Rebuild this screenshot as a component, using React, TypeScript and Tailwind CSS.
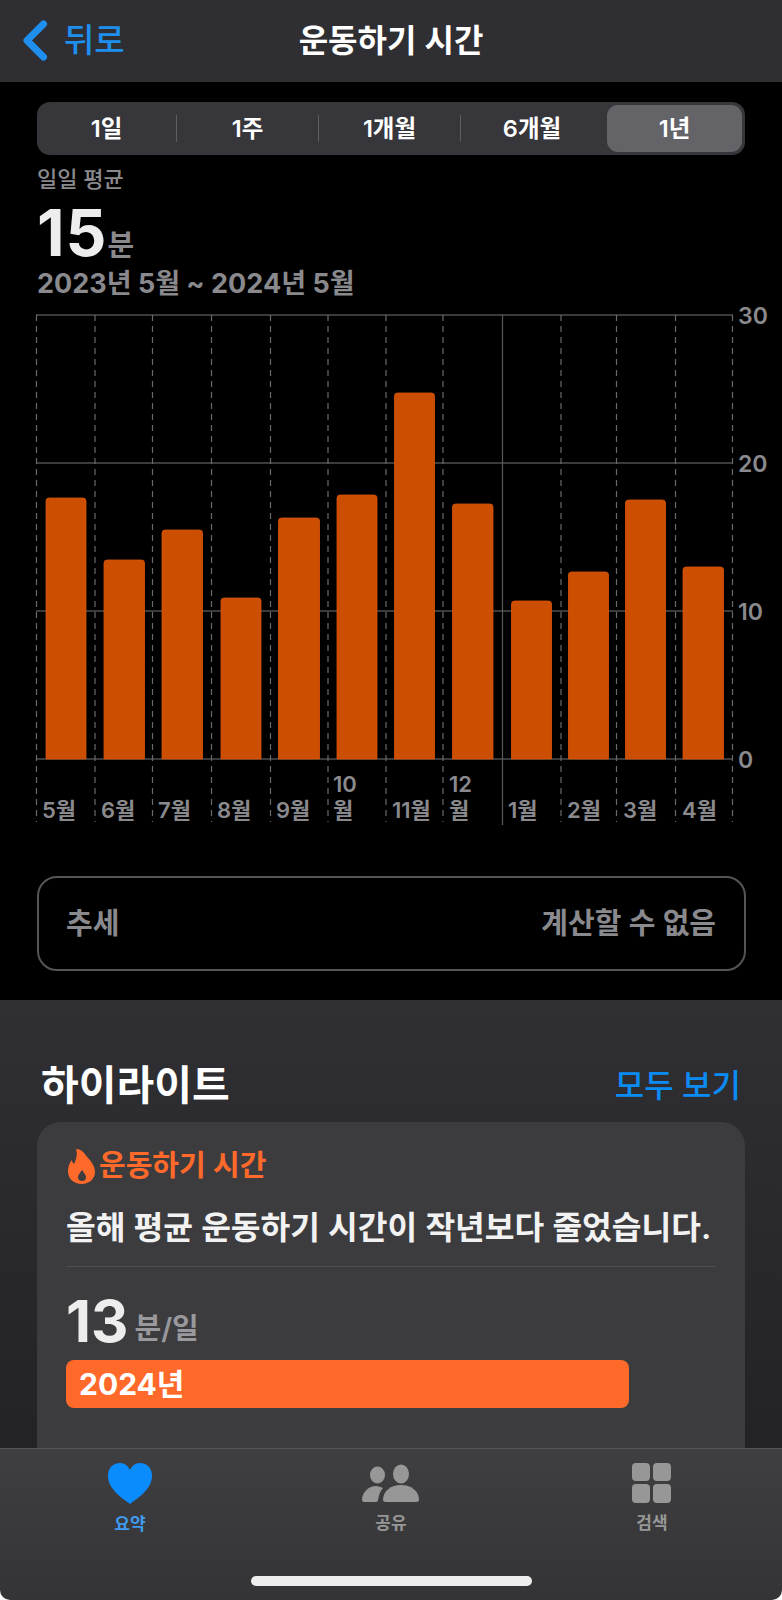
const FONT = '"Inter", "Noto Sans CJK KR", sans-serif';

const TABS = ['1일', '1주', '1개월', '6개월', '1년'];

const GRID_X = [36.5, 95, 152.5, 211.5, 270.5, 328, 386, 443, 502.5, 561, 616.5, 675.5, 732.5];

const BARS = [
  { x: 46, w: 40, top: 498, label: '5월', lx: 42 },
  { x: 104, w: 40.5, top: 560, label: '6월', lx: 101 },
  { x: 162, w: 40.5, top: 530, label: '7월', lx: 158 },
  { x: 221, w: 40, top: 598, label: '8월', lx: 217 },
  { x: 278.5, w: 41, top: 518, label: '9월', lx: 276 },
  { x: 337, w: 40, top: 495, label: '10', lx: 333 },
  { x: 394.5, w: 40, top: 393, label: '11월', lx: 392 },
  { x: 452.5, w: 40.5, top: 504, label: '12', lx: 449 },
  { x: 511.5, w: 40, top: 601, label: '1월', lx: 508 },
  { x: 568.5, w: 40, top: 572, label: '2월', lx: 567 },
  { x: 625.5, w: 40, top: 500, label: '3월', lx: 623 },
  { x: 683, w: 40.5, top: 567, label: '4월', lx: 682 },
];

const Y_LABELS = [
  { y: 315, t: '30' },
  { y: 463, t: '20' },
  { y: 611, t: '10' },
  { y: 759, t: '0' },
];

// svg coords are page coords, the box starts at y=300
function Chart() {
  return (
    <svg width="782" height="530" viewBox="0 300 782 530" className="block" style={{ fontFamily: FONT }}>
      {[315, 463, 611, 759].map((y) => (
        <line key={y} x1="36" x2="733" y1={y} y2={y} stroke="#4f4f52" strokeWidth="1.5" />
      ))}
      {GRID_X.map((x, i) => (
        <line
          key={x}
          x1={x}
          x2={x}
          y1="315"
          y2={i === 8 ? 825 : 822}
          stroke={i === 8 ? '#5a5a5e' : '#6a6a6d'}
          strokeWidth="1.2"
          strokeDasharray={i === 8 ? undefined : '6 5'}
        />
      ))}
      {BARS.map((b) => (
        <path
          key={b.x}
          d={`M${b.x} 759V${b.top + 3}q0-3 3-3H${b.x + b.w - 3}q3 0 3 3V759Z`}
          fill="#cc4e00"
          stroke="#d9540a"
          strokeWidth="0.8"
        />
      ))}
      {BARS.map((b) => (
        <text key={b.label} x={b.lx} y="818" fill="#8a8a8e" fontSize="22" fontWeight="600">
          {b.label === '10' || b.label === '12' ? '월' : b.label}
        </text>
      ))}
      <text x="333" y="792" fill="#8a8a8e" fontSize="22" fontWeight="600">10</text>
      <text x="449" y="792" fill="#8a8a8e" fontSize="22" fontWeight="600">12</text>
      {Y_LABELS.map((l) => (
        <text key={l.t} x="738" y={l.y + 9} fill="#8a8a8e" fontSize="23" fontWeight="600">{l.t}</text>
      ))}
    </svg>
  );
}

function BackChevron() {
  return (
    <svg width="26" height="41" viewBox="0 0 26 41" fill="none" className="shrink-0">
      <path d="M21.5 4 5 20.5 21.5 37" stroke="#1e8fef" strokeWidth="7" strokeLinecap="round" strokeLinejoin="round" />
    </svg>
  );
}

function Flame() {
  return (
    <svg width="27" height="35" viewBox="0 0 27 35" className="ml-[2px] shrink-0">
      <path
        fill="#ff6a2b"
        fillRule="evenodd"
        d="M8 0C14 0 17 5 20 9C24 13 27 18 27 23C27 30 21 35 14 35C6 35 0 30 0 22C0 17 2 13 4 11C4 13 5 14 6 15C8 11 10 5 8 0ZM14 21C12 24 10 26 10 28C10 31 12 32 14 32C16 32 18 31 18 28C18 26 16 24 14 21Z"
      />
    </svg>
  );
}

function Heart() {
  return (
    <svg width="44" height="41" viewBox="0 0 44 41">
      <path
        fill="#0a8cff"
        d="M22 41C14 35 0 26 0 13 0 5 5 0 12 0c5 0 8 3 10 7 2-4 5-7 10-7 7 0 12 5 12 13 0 13-14 22-22 28Z"
      />
    </svg>
  );
}

function People() {
  return (
    <svg width="58" height="40" viewBox="0 0 58 40" fill="#979797">
      <ellipse cx="15.5" cy="12" rx="7.5" ry="8.5" />
      <ellipse cx="39" cy="11" rx="8" ry="9.5" />
      <path d="M0 37c0-7 6-14 14-14 2 0 5 1 7 2-3 3-4 7-5 12 0 1-1 2-2 2H2c-1 0-2-1-2-2Z" />
      <path d="M21 37c0-9 8-15 18-15s18 6 18 15c0 1-1 2-3 2H24c-2 0-3-1-3-2Z" />
    </svg>
  );
}

function GridIcon() {
  return (
    <svg width="40" height="40" viewBox="0 0 40 40" fill="#979797">
      <rect x="0" y="0" width="18" height="18" rx="4" />
      <rect x="21" y="0" width="18" height="18" rx="4" />
      <rect x="0" y="21" width="18" height="19" rx="4" />
      <rect x="21" y="21" width="18" height="19" rx="4" />
    </svg>
  );
}

export default function App() {
  return (
    <div className="flex h-[1600px] w-[782px] flex-col overflow-hidden bg-white" style={{ fontFamily: FONT }}>
      <header className="relative flex h-[82px] shrink-0 items-center justify-center bg-[#2f2f33]">
        <div className="absolute left-[22px] top-[20px] flex items-center gap-[16px] text-[#1e8fef]">
          <BackChevron />
          <span className="text-[33px] font-medium leading-[41px]">뒤로</span>
        </div>
        <h1 className="text-[32px] font-semibold text-white">운동하기 시간</h1>
      </header>

      <section className="h-[918px] shrink-0 bg-black px-[37px] pt-[20px]">
        <div className="flex h-[53px] w-[708px] items-center rounded-[13px] bg-[#36363b]">
          {TABS.map((t, i) => (
            <div key={t} className={`flex items-center ${i === 0 ? 'w-[140px]' : i === 4 ? 'w-[142px] pl-[4px] pr-[3px]' : 'w-[142px]'}`}>
              <div
                className={`flex h-[47px] flex-1 items-center justify-center text-[23.5px] font-semibold text-white ${
                  i === 4 ? 'rounded-[11px] bg-[#636368]' : ''
                }`}
              >
                {t}
              </div>
              {i < 3 && <div className="h-[27px] w-px bg-[#5e5e62]" />}
            </div>
          ))}
        </div>

        <p className="mt-[11px] text-[22px] font-medium leading-[26px] text-[#8a8a8e]">일일 평균</p>
        <div className="mt-[12px] flex items-end leading-none">
          <span className="text-[64px] font-bold leading-[58px] tracking-[1px] text-[#ededed]">15</span>
          <span className="text-[29px] font-semibold leading-[32px] text-[#8a8a8e]">분</span>
        </div>
        <p className="mt-[6px] text-[27px] font-bold leading-[32px] text-[#8a8a8e]">2023년 5월 ~ 2024년 5월</p>

        <div className="-ml-[37px]">
          <Chart />
        </div>

        <div className="mt-[46px] flex h-[95px] w-[709px] items-center justify-between rounded-[20px] border-2 border-[#555558] pl-[27px] pr-[28px] text-[29px] font-semibold text-[#8a8a8e]">
          <span>추세</span>
          <span>계산할 수 없음</span>
        </div>
      </section>

      <section className="min-h-0 flex-1 bg-linear-to-b from-[#303034] to-[#232325] px-[37px] pt-[58px]">
        <div className="flex items-center justify-between pl-[4px] pr-[4px]">
          <h2 className="text-[41px] font-semibold leading-[50px] text-white">하이라이트</h2>
          <span className="mt-[3px] text-[32px] font-medium leading-[50px] text-[#0b8cf5]">모두 보기</span>
        </div>
        <div className="mt-[11px] h-[400px] rounded-[24px] bg-[#3c3c3f] px-[29px] pt-[26px]">
          <div className="flex items-center gap-[4px]">
            <Flame />
            <span className="text-[29px] font-semibold leading-[36px] text-[#ff6a2b]">운동하기 시간</span>
          </div>
          <p className="mt-[22px] whitespace-nowrap text-[32.3px] font-semibold leading-[44px] text-[#f2f2f2]">
            올해 평균 운동하기 시간이 작년보다 줄었습니다.
          </p>
          <div className="mt-[16px] h-px bg-[#4e4e51]" />
          <div className="mt-[28px] flex items-end">
            <span className="text-[58px] font-bold leading-[52px] text-[#ededed]">13</span>
            <span className="ml-[6px] text-[29px] font-semibold leading-[36px] text-[#98989d]">분/일</span>
          </div>
          <div className="mt-[13px] flex h-[48px] w-[563px] items-center rounded-[8px] bg-[#ff6a2b] pl-[13px] text-[30px] font-bold text-white">
            2024년
          </div>
        </div>
      </section>

      <nav className="relative h-[152px] shrink-0 rounded-b-[10px] border-t border-[#555557] bg-linear-to-b from-[#3f3f41] to-[#343436]">
        <div className="flex justify-between pl-[108px] pr-[110px] pt-[14px]">
          <div className="flex w-[44px] flex-col items-center">
            <Heart />
            <span className="mt-[8px] text-[17px] font-semibold text-[#3f9cf0]">요약</span>
          </div>
          <div className="-ml-[2px] flex w-[58px] flex-col items-center">
            <People />
            <span className="mt-[8px] text-[17px] font-semibold text-[#979797]">공유</span>
          </div>
          <div className="flex w-[40px] flex-col items-center">
            <GridIcon />
            <span className="mt-[8px] whitespace-nowrap text-[17px] font-semibold text-[#979797]">검색</span>
          </div>
        </div>
        <div className="absolute bottom-[14px] left-[251px] h-[10px] w-[281px] rounded-full bg-[#eeeeee]" />
      </nav>
    </div>
  );
}
